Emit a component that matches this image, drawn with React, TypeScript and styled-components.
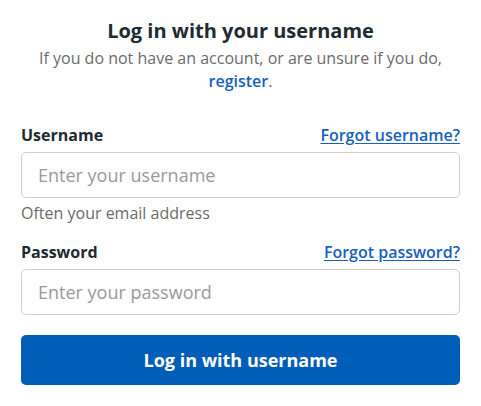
import React from 'react';
import styled, { createGlobalStyle } from 'styled-components';

const GlobalStyle = createGlobalStyle`
  html, body {
    margin: 0;
    padding: 0;
    background: #fff;
  }
  body {
    font-family: 'Open Sans', 'Noto Sans', sans-serif;
    color: #212b32;
  }
  * {
    box-sizing: border-box;
  }
`;

const Page = styled.div`
  width: 481px;
  padding: 17px 21px 0 21px;
`;

const Header = styled.div`
  text-align: center;
  margin-bottom: 31px;
`;

const Title = styled.h1`
  margin: 0;
  font-size: 20px;
  line-height: 28px;
  font-weight: 700;
  color: #212b32;
`;

const Intro = styled.p`
  margin: 2px 0 0;
  font-size: 16px;
  line-height: 23px;
  color: #6b6b6b;
`;

const InlineLink = styled.a`
  color: #1761bd;
  text-decoration: none;
  font-weight: 600;
`;

const Field = styled.div`
  display: flex;
  flex-direction: column;
`;

const LabelRow = styled.div`
  display: flex;
  justify-content: space-between;
  align-items: baseline;
  margin-bottom: 6px;
`;

const Label = styled.label`
  font-size: 16px;
  line-height: 22px;
  font-weight: 700;
  color: #212b32;
`;

const HelpLink = styled.a`
  font-size: 16px;
  line-height: 22px;
  font-weight: 600;
  color: #1761bd;
  text-decoration: underline;
  text-underline-offset: 2px;
`;

const Input = styled.input`
  width: 100%;
  height: 46px;
  border: 1px solid #cfcfcf;
  border-radius: 5px;
  padding: 0 16px;
  font-family: inherit;
  font-size: 18px;
  color: #212b32;
  outline: none;

  &::placeholder {
    color: #9a9a9a;
  }
`;

const Hint = styled.div`
  margin-top: 4px;
  font-size: 16px;
  line-height: 22px;
  color: #6b6b6b;
`;

const Spacer = styled.div<{ $h: number }>`
  height: ${p => p.$h}px;
`;

const SubmitButton = styled.button`
  width: 100%;
  height: 50px;
  border: none;
  border-radius: 5px;
  background: #005eb8;
  color: #fff;
  font-family: inherit;
  font-size: 18px;
  font-weight: 700;
  cursor: pointer;
`;

export default function App() {
  return (
    <>
      <GlobalStyle />
      <Page>
        <Header>
          <Title>Log in with your username</Title>
          <Intro>
            If you do not have an account, or are unsure if you do,{' '}
            <br />
            <InlineLink href="#">register</InlineLink>.
          </Intro>
        </Header>

        <Field>
          <LabelRow>
            <Label htmlFor="username">Username</Label>
            <HelpLink href="#">Forgot username?</HelpLink>
          </LabelRow>
          <Input id="username" placeholder="Enter your username" />
          <Hint>Often your email address</Hint>
        </Field>

        <Spacer $h={17} />

        <Field>
          <LabelRow>
            <Label htmlFor="password">Password</Label>
            <HelpLink href="#">Forgot password?</HelpLink>
          </LabelRow>
          <Input id="password" type="password" placeholder="Enter your password" />
        </Field>

        <Spacer $h={20} />

        <SubmitButton type="button">Log in with username</SubmitButton>
      </Page>
    </>
  );
}
